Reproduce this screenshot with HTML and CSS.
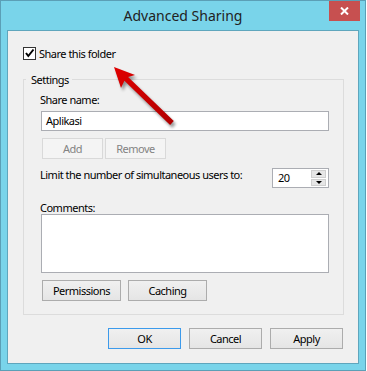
FILE: index.html
```html
<!DOCTYPE html>
<html lang="en">
<head>
    <meta charset="UTF-8">
    <title>Advanced Sharing</title>
    <link rel="stylesheet" href="styles.css">
</head>
<body>
    <div class="window">
        <div class="titlebar">
            <span class="title">Advanced Sharing</span>
            <span class="close">
                <svg width="9" height="8" viewBox="0 0 9 8"><path d="M1 0.5 L8 7.5 M8 0.5 L1 7.5" stroke="#fff" stroke-width="2"/></svg>
            </span>
        </div>
        <div class="client">
            <div class="check-row">
                <span class="checkbox">
                    <svg width="11" height="11" viewBox="0 0 11 11"><path d="M2 5 L4.3 8 L9.5 1.5" fill="none" stroke="#000" stroke-width="2"/></svg>
                </span>
                <span>Share this folder</span>
            </div>
            <div class="group">
                <div class="legend">Settings</div>
                <div class="label share-label">Share name:</div>
                <div class="textbox">Aplikasi</div>
                <div class="btn-row small">
                    <button disabled>Add</button>
                    <button disabled>Remove</button>
                </div>
                <div class="limit-row">
                    <span class="label">Limit the number of simultaneous users to:</span>
                    <div class="spin">
                        <span>20</span>
                        <div class="spin-btns">
                            <span class="up"></span>
                            <span class="down"></span>
                        </div>
                    </div>
                </div>
                <div class="label comments-label">Comments:</div>
                <div class="textarea"></div>
                <div class="btn-row wide">
                    <button>Permissions</button>
                    <button>Caching</button>
                </div>
            </div>
            <div class="dialog-buttons">
                <button class="default">OK</button>
                <button>Cancel</button>
                <button>Apply</button>
            </div>
        </div>
        <!-- annotation arrow drawn over the dialog -->
        <svg class="arrow" width="366" height="371" viewBox="0 0 366 371">
            <defs>
                <filter id="blur"><feGaussianBlur stdDeviation="1.4"/></filter>
                <linearGradient id="red" x1="0" y1="0" x2="1" y2="1">
                    <stop offset="0" stop-color="#e00000"/>
                    <stop offset="1" stop-color="#b00000"/>
                </linearGradient>
            </defs>
            <path d="M114 67 L121 88 L124.4 80.8 L170.1 125 L173.8 121.1 L128.1 76.9 L135 75 Z" fill="#000" opacity="0.4" filter="url(#blur)" transform="translate(2 3)"/>
            <path d="M114 67 L121 88 L124.4 80.8 L170.1 125 L173.8 121.1 L128.1 76.9 L135 75 Z" fill="url(#red)"/>
        </svg>
    </div>
</body>
</html>
```

FILE: styles.css
```css
* {
    box-sizing: border-box;
}
body {
    margin: 0;
    background: #fff;
    font-family: 'Noto Sans', 'Open Sans', sans-serif;
    font-size: 11px;
    letter-spacing: -0.5px;
    color: #000;
}
.window {
    position: relative;
    width: 366px;
    height: 371px;
    border: 1px solid #5b9fb6;
    background: #79d4ea;
    padding: 0 6px 6px;
    display: flex;
    flex-direction: column;
}
.titlebar {
    height: 29px;
    display: grid;
    grid-template-columns: 1fr auto 1fr;
    align-items: start;
}
.title {
    grid-column: 2;
    font-size: 14px;
    letter-spacing: 0;
    line-height: 30px;
    color: #222;
}
.close {
    grid-column: 3;
    justify-self: end;
    width: 31px;
    height: 20px;
    margin-right: -1px;
    background: #c75050;
    display: flex;
    align-items: center;
    justify-content: center;
}
.client {
    flex: 1;
    border: 1px solid #5fa6bd;
    background: #f0f0f0;
    padding: 0 14px 0 15px;
    white-space: nowrap;
}
.check-row {
    margin-top: 16px;
    height: 13px;
    display: flex;
    align-items: center;
    gap: 3px;
    line-height: 15px;
}
.checkbox {
    width: 13px;
    height: 13px;
    border: 1px solid #333;
    background: #fff;
    display: flex;
}
.group {
    margin-top: 19px;
    border: 1px solid #dcdcdc;
    padding: 0 14px 13px 17px;
}
.legend {
    width: fit-content;
    margin: -8px 0 0 -15px;
    padding: 0 3px 0 5px;
    background: #f0f0f0;
    line-height: 15px;
}
.label {
    display: block;
    line-height: 15px;
    margin-left: -1px;
}
.share-label {
    margin-top: 5px;
}
.textbox {
    margin-top: 4px;
    height: 20px;
    border: 1px solid #abadb3;
    background: #fff;
    padding-left: 4px;
    line-height: 18px;
}
button {
    font-family: inherit;
    font-size: inherit;
    letter-spacing: inherit;
    color: #000;
    height: 21px;
    padding: 0;
    border: 1px solid #acacac;
    border-radius: 0;
    background: linear-gradient(#f0f0f0, #e5e5e5);
}
button:disabled {
    color: #838383;
    border-color: #d9d9d9;
    background: #f4f4f4;
}
.btn-row {
    display: flex;
    margin-left: 1px;
}
.btn-row.small {
    margin-top: 7px;
    gap: 2px;
}
.btn-row.small button {
    width: 61px;
}
.limit-row {
    margin-top: 8px;
    display: flex;
    justify-content: space-between;
    align-items: flex-start;
}
.spin {
    margin-top: 1px;
    width: 57px;
    height: 20px;
    border: 1px solid #abadb3;
    background: #fff;
    display: flex;
    justify-content: space-between;
    padding: 1px 2px 1px 5px;
    line-height: 16px;
}
.spin-btns {
    width: 15px;
    display: flex;
    flex-direction: column;
    gap: 1px;
}
.spin-btns span {
    flex: 1;
    background: #e6e6e6;
    border: 1px solid #cfcfcf;
    display: flex;
    align-items: center;
    justify-content: center;
}
.spin-btns span::after {
    content: "";
    border-left: 3px solid transparent;
    border-right: 3px solid transparent;
}
.spin-btns .up::after {
    border-bottom: 3px solid #000;
}
.spin-btns .down::after {
    border-top: 3px solid #000;
}
.comments-label {
    margin-top: 14px;
    line-height: 12px;
}
.textarea {
    height: 59px;
    border: 1px solid #abadb3;
    background: #fff;
}
.btn-row.wide {
    margin-top: 7px;
    gap: 7px;
}
.btn-row.wide button {
    width: 79px;
}
.dialog-buttons {
    margin-top: 13px;
    display: flex;
    justify-content: flex-end;
    gap: 8px;
    padding-right: 1px;
}
.dialog-buttons button {
    width: 73px;
}
.dialog-buttons .default {
    border-color: #3c9aeb;
}
.arrow {
    position: absolute;
    top: -1px;
    left: -1px;
    pointer-events: none;
}
```
